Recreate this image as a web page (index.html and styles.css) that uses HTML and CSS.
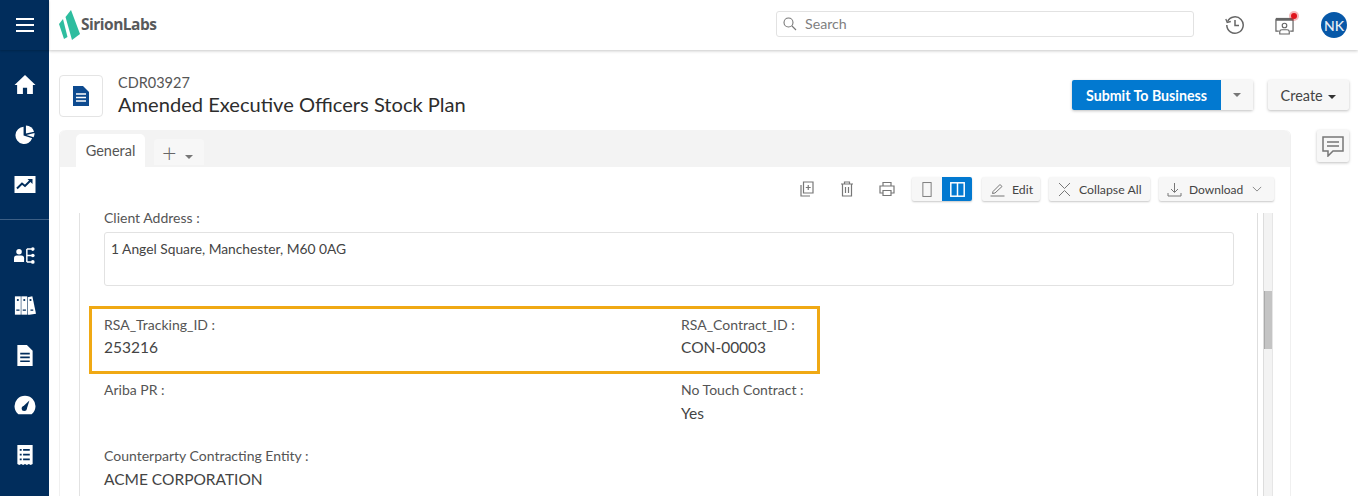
FILE: index.html
```html
<!DOCTYPE html>
<html lang="en">
<head>
<meta charset="utf-8">
<title>Amended Executive Officers Stock Plan</title>
<link rel="stylesheet" href="styles.css">
</head>
<body>
<div class="app">
  <nav class="sidebar">
    <div class="burger"><span></span><span></span><span></span></div>
    <div class="navgroup first">
      <svg viewBox="0 0 20 20" class="navicon"><path d="M10 1 L20 10.5 H17.500 V19 H12 V13 H8 V19 H2.500 V10.500 H0 Z" fill="#fff"/></svg>
      <svg viewBox="0 0 22 22" class="navicon"><path d="M9.500 3 A9 9 0 1 0 18.500 15 L9.500 12 Z" fill="#fff"/><path d="M12 1.500 A9.500 9.500 0 0 1 20.500 8 L12 10 Z" fill="#fff"/><path d="M12.500 11.500 L21 9.500 A9.500 9.500 0 0 1 20 14 Z" fill="#fff"/></svg>
      <svg viewBox="0 0 22 18" class="navicon"><rect width="21" height="17" x=".5" y=".5" fill="#fff"/><path d="M3 13 L8 8 L11 10.500 L17 4.500" fill="none" stroke="#012d5c" stroke-width="2"/><path d="M13.500 3.500 H18.500 V8.500 Z" fill="#012d5c"/></svg>
    </div>
    <div class="navgroup second">
      <svg viewBox="0 0 24 22" class="navicon"><circle cx="5.500" cy="7" r="3" fill="#fff"/><path d="M0 18 V14 Q0 11 3 11 H8 Q11 11 11 14 V18 Z" fill="#fff"/><path d="M14 4 V18 M14 4 H19 M14 11 H19 M14 18 H19" fill="none" stroke="#fff" stroke-width="1.600"/><circle cx="20.500" cy="4" r="2" fill="#fff"/><circle cx="20.500" cy="11" r="2" fill="#fff"/><circle cx="20.500" cy="18" r="2" fill="#fff"/></svg>
      <svg viewBox="0 0 24 22" class="navicon"><rect x="1" y="1" width="6.400" height="20" fill="#fff"/><rect x="8" y="1" width="6.400" height="20" fill="#fff"/><path d="M15 2 L20 1 L24 20 L17 21 H15 Z" fill="#fff"/><circle cx="4.200" cy="5" r="1.200" fill="#012d5c"/><circle cx="11.200" cy="5" r="1.200" fill="#012d5c"/><circle cx="18" cy="5" r="1.200" fill="#012d5c"/><path d="M2.500 16 H6 M9.500 16 H13 M18 16 H21" stroke="#012d5c" stroke-width="1.400"/></svg>
      <svg viewBox="0 0 18 22" class="navicon doc"><path d="M1 0 H11 L17 6 V22 H1 Z" fill="#fff"/><path d="M4 9 H14 M4 13 H14 M4 17 H14" stroke="#012d5c" stroke-width="1.700"/></svg>
      <svg viewBox="0 0 20 18" class="navicon"><path d="M4 17 A9.500 9.500 0 1 1 16 17 Z" fill="#fff"/><path d="M7 11 L14 4.500 L11.500 12.500 Z" fill="#012d5c"/><circle cx="9.300" cy="11.700" r="2.300" fill="#012d5c"/></svg>
      <svg viewBox="0 0 18 22" class="navicon doc"><path d="M1 0 H17 V20 L15 21 L13 20 L11 21 L9 20 L7 21 L5 20 L3 21 L1 20 Z" fill="#fff"/><path d="M7 5 H14 M7 10 H14 M7 15 H14 M3.500 5 H5.500 M3.500 10 H5.500 M3.500 15 H5.500" stroke="#012d5c" stroke-width="1.800"/></svg>
    </div>
  </nav>
  <div class="main">
    <header class="topbar">
      <div class="logo">
        <svg viewBox="0 0 21 30" class="logomark"><path d="M4 9 L0 14 L5 29 L8.500 27 Z" fill="#2ebd9f"/><path d="M12 0 L6.500 7 L13 30 L21 24 Z" fill="#2ebd9f"/></svg>
        <span class="logotext">SirionLabs</span>
      </div>
      <div class="searchbox">
        <svg viewBox="0 0 14 14" class="searchicon"><circle cx="5.500" cy="5.500" r="4.500" fill="none" stroke="#777" stroke-width="1.100"/><path d="M9 9 L13 13" stroke="#777" stroke-width="1.100"/></svg>
        <span class="searchtext">Search</span>
      </div>
      <div class="topicons">
        <svg viewBox="0 0 20 20" class="ticon"><path d="M2.600 6.500 A8.200 8.200 0 1 1 1.800 10" fill="none" stroke="#666" stroke-width="1.500"/><path d="M0.800 4 L2.200 7.500 L5.800 6.500" fill="none" stroke="#666" stroke-width="1.300"/><path d="M10 5 V10.500 H14" fill="none" stroke="#666" stroke-width="1.500"/></svg>
        <div class="notif">
          <svg viewBox="0 0 20 20" class="ticon small"><path d="M1 3 H19 V16 H16 M4 16 H1 V3" fill="none" stroke="#666" stroke-width="1.300"/><rect x="1" y="2" width="18" height="3" fill="#666"/><circle cx="10" cy="10" r="2.400" fill="none" stroke="#666" stroke-width="1.200"/><path d="M5 19 V16.500 Q5 14.500 7.500 14.500 H12.500 Q15 14.500 15 16.500 V19 Z" fill="none" stroke="#666" stroke-width="1.200"/></svg>
          <span class="dot"></span>
        </div>
        <div class="avatar">NK</div>
      </div>
    </header>
    <div class="content">
      <div class="pagehead">
        <div class="docbox"><svg viewBox="0 0 16 20" class="docicon"><path d="M0 0 H10 L16 6 V20 H0 Z" fill="#0d4a8f"/><path d="M3 8 H13 M3 11.500 H13 M3 15 H13" stroke="#fff" stroke-width="1.300"/></svg></div>
        <div class="titles">
          <div class="docid">CDR03927</div>
          <h1>Amended Executive Officers Stock Plan</h1>
        </div>
        <div class="actions">
          <div class="splitbtn"><button class="primary">Submit To Business</button><button class="caretbtn"><i class="caret grey"></i></button></div>
          <button class="create">Create <i class="caret dark"></i></button>
        </div>
      </div>
      <div class="belowhead">
        <section class="card">
          <div class="tabs">
            <div class="tab">General</div>
            <div class="addtab"><span class="plus">+</span><i class="caret grey tiny"></i></div>
          </div>
          <div class="toolbar">
            <svg viewBox="0 0 16 16" class="tool"><path d="M4.500 1 H14 V12 H4.500 Z M2 4 V15 H11" fill="none" stroke="#777" stroke-width="1.200"/><path d="M9.250 4 V9 M6.800 6.500 H11.700" stroke="#777" stroke-width="1.200"/></svg>
            <svg viewBox="0 0 16 16" class="tool"><path d="M2 3 H14 M5.500 3 V1 H10.500 V3 M3.500 3 V15 H12.500 V3 M6.500 6 V12 M9.500 6 V12" fill="none" stroke="#777" stroke-width="1.200"/></svg>
            <svg viewBox="0 0 16 16" class="tool"><path d="M4 5 V1.500 H12 V5 M4 12 H1 V5 H15 V12 H12 M4 9.500 H12 V14.500 H4 Z" fill="none" stroke="#777" stroke-width="1.200"/></svg>
            <div class="viewtoggle">
              <span class="vt"><svg viewBox="0 0 10 16"><rect x=".6" y=".6" width="8.800" height="14.800" fill="none" stroke="#777" stroke-width="1"/></svg></span>
              <span class="vt on"><svg viewBox="0 0 15 15"><rect x=".8" y=".8" width="13.400" height="13.400" fill="none" stroke="#fff" stroke-width="1.500"/><path d="M7.500 1 V14" stroke="#fff" stroke-width="1.500"/></svg></span>
            </div>
            <button class="toolbtn edit"><svg viewBox="0 0 15 15"><path d="M3 9.500 L10 2.500 L12 4.500 L5 11 L2.500 11.500 Z" fill="none" stroke="#777" stroke-width="1"/><path d="M0.500 14 H14.500" stroke="#777"/></svg>Edit</button>
            <button class="toolbtn collapse"><svg viewBox="0 0 13 15"><path d="M1 1 L6.500 6.500 L12 1 M1 14 L6.500 8.500 L12 14" fill="none" stroke="#777" stroke-width="1"/></svg>Collapse All</button>
            <button class="toolbtn download"><svg viewBox="0 0 15 15"><path d="M7.500 1 V10 M4 7 L7.500 10.500 L11 7 M1 11 V14 H14 V11" fill="none" stroke="#777" stroke-width="1"/></svg>Download<svg viewBox="0 0 12 7" class="chev"><path d="M1 1 L6 6 L11 1" fill="none" stroke="#777" stroke-width="1"/></svg></button>
          </div>
          <div class="scrollarea">
            <div class="fields">
              <div class="field addr">
                <div class="label">Client Address :</div>
                <div class="textarea">1 Angel Square, Manchester, M60 0AG</div>
              </div>
              <div class="highlight">
                <div class="field"><div class="label">RSA_Tracking_ID :</div><div class="value">253216</div></div>
                <div class="field"><div class="label">RSA_Contract_ID :</div><div class="value">CON-00003</div></div>
              </div>
              <div class="row">
                <div class="field"><div class="label">Ariba PR :</div></div>
                <div class="field"><div class="label">No Touch Contract :</div><div class="value">Yes</div></div>
              </div>
              <div class="row single">
                <div class="field"><div class="label">Counterparty Contracting Entity :</div><div class="value">ACME CORPORATION</div></div>
              </div>
            </div>
            <div class="scrolltrack"><div class="thumb"></div></div>
          </div>
        </section>
        <aside class="side">
          <button class="commentbtn"><svg viewBox="0 0 22 21"><path d="M1 1 H21 V15 H11 L6 20 V15 H1 Z" fill="none" stroke="#777" stroke-width="1.500"/><path d="M5 6 H17 M5 10 H17" stroke="#777" stroke-width="1.500"/></svg></button>
        </aside>
      </div>
    </div>
  </div>
</div>
</body>
</html>
```
FILE: styles.css
```css
* { box-sizing: border-box; }
html, body { margin: 0; padding: 0; height: 496px; overflow: hidden; background: #fff; }
body { font-family: Lato, "Open Sans", sans-serif; color: #444; font-size: 14px; }
button { font-family: inherit; cursor: pointer; }
.app { display: flex; height: 496px; overflow: hidden; }

.sidebar { width: 49px; flex: none; background: #012d5c; display: flex; flex-direction: column; align-items: center; }
.burger { height: 50px; flex: none; display: flex; flex-direction: column; justify-content: center; gap: 4px; width: 100%; align-items: center; box-shadow: 0 1px 2px rgba(0,0,0,.2); }
.burger span { display: block; width: 18px; height: 2px; background: #fff; }
.navgroup { display: flex; flex-direction: column; align-items: center; width: 100%; }
.navgroup.first { padding-top: 24px; gap: 29px; height: 170px; flex: none; border-bottom: 1px solid #3d5f85; }
.navgroup.second { padding-top: 25px; gap: 29px; }
.navicon { width: 22px; height: 21px; display: block; flex: none; }
.navicon.doc { width: 18px; height: 21px; }

.main { flex: 1; min-width: 0; display: flex; flex-direction: column; }
.topbar { height: 50px; flex: none; display: flex; align-items: center; padding: 0 11px 0 10px; box-shadow: 0 1px 3px rgba(0,0,0,.22); position: relative; }
.logo { display: flex; align-items: center; gap: 1px; }
.logomark { width: 21px; height: 30px; }
.logotext { font-family: "Open Sans", sans-serif; font-weight: 700; font-size: 15.500px; line-height: 20px; color: #58595b; letter-spacing: -.5px; margin-top: -3px; }
.searchbox { margin-left: auto; margin-top: -2px; width: 418px; height: 26px; border: 1px solid #e2e2e2; border-radius: 3px; display: flex; align-items: center; padding-left: 6px; gap: 8px; color: #808080; font-size: 14.200px; }
.searchicon { width: 14px; height: 14px; }
.searchtext { margin-top: -2px; }
.topicons { display: flex; align-items: center; margin-left: 31px; }
.ticon { width: 20px; height: 20px; display: block; }
.ticon.small { width: 19px; height: 19px; }
.notif { position: relative; margin-left: 30px; }
.dot { position: absolute; top: -3px; right: -3px; width: 6px; height: 6px; border-radius: 50%; background: #e0141c; box-shadow: 0 0 0 2px rgba(224,20,28,.3); }
.avatar { margin-left: 27px; width: 26px; height: 26px; border-radius: 50%; background: #0758a8; color: #e8eef5; font-size: 14px; font-weight: 500; display: flex; align-items: center; justify-content: center; }

.content { flex: 1; min-height: 0; padding: 25px 9px 0 10px; display: flex; flex-direction: column; }
.pagehead { display: flex; height: 55px; flex: none; }
.docbox { width: 44px; height: 42px; border: 1px solid #e4e4e4; border-radius: 4px; display: flex; align-items: center; justify-content: center; }
.docicon { width: 16px; height: 20px; }
.titles { margin-left: 15px; margin-top: -1px; }
.docid { font-size: 14.500px; color: #555; line-height: 18px; }
h1 { margin: 0; font-size: 20.100px; font-weight: 400; color: #2d2d2d; line-height: 24px; }
.actions { margin-left: auto; display: flex; align-items: flex-start; gap: 15px; padding-top: 5px; }
.splitbtn { display: flex; border-radius: 2px; box-shadow: 0 1px 3px rgba(0,0,0,.25); }
.primary { width: 149px; height: 30px; border: 0; background: #0279d0; color: #fff; font-weight: 700; font-size: 14.200px; border-radius: 2px 0 0 2px; padding: 0; }
.caretbtn { width: 32px; height: 30px; border: 0; background: #f7f7f7; padding: 0; display: flex; align-items: center; justify-content: center; }
.create { width: 81px; height: 30px; border: 0; border-radius: 2px; background: #f7f7f7; box-shadow: 0 1px 3px rgba(0,0,0,.25); color: #444; font-size: 14.500px; padding: 0; }
.caret { display: inline-block; width: 0; height: 0; border-left: 4px solid transparent; border-right: 4px solid transparent; vertical-align: 2px; margin-left: 2px; }
.caret.grey { border-top: 4px solid #777; margin-left: 0; vertical-align: 0; }
.caret.dark { border-top: 4px solid #333; }
.caret.tiny { margin: 10px 0 0 8px; }

.belowhead { flex: 1; min-height: 0; display: flex; gap: 26px; }
.card { width: 1232px; flex: none; height: 380px; border-radius: 6px 6px 0 0; border: 1px solid #f0f0f0; border-top: 0; display: flex; flex-direction: column; }
.tabs { height: 37px; flex: none; background: #f3f3f3; border-radius: 6px 6px 0 0; display: flex; align-items: flex-end; padding-left: 16px; gap: 9px; }
.tab { width: 69px; height: 33px; background: #fff; border-radius: 5px 5px 0 0; color: #555; font-size: 14.500px; text-align: center; line-height: 33px; }
.addtab { width: 50px; height: 26px; margin-bottom: 2px; background: #f7f7f7; border-radius: 4px 4px 0 0; display: flex; align-items: center; padding-left: 8px; color: #666; }
.plus { font-size: 25px; line-height: 26px; font-weight: 300; }

.toolbar { height: 46px; flex: none; display: flex; align-items: center; justify-content: flex-end; padding: 0 16px 2px 0; }
.tool { width: 16px; height: 16px; margin-right: 24px; }
.tool:nth-child(3) { margin-right: 17px; }
.viewtoggle { display: flex; height: 24px; box-shadow: 0 1px 2px rgba(0,0,0,.22); border-radius: 2px; background: #f7f7f7; margin-right: 10px; }
.vt { width: 30px; display: flex; align-items: center; justify-content: center; }
.vt svg { width: 10px; height: 15px; }
.vt.on { background: #0279d0; border-radius: 0 2px 2px 0; }
.vt.on svg { width: 15px; height: 15px; }
.toolbtn { height: 24px; border: 0; border-radius: 2px; background: #f7f7f7; box-shadow: 0 1px 2px rgba(0,0,0,.22); color: #444; font-size: 12.300px; display: flex; align-items: center; padding: 0; margin-right: 9px; }
.toolbtn:last-child { margin-right: 0; }
.toolbtn svg { width: 15px; height: 15px; flex: none; }
.edit { width: 58px; padding-left: 8px; gap: 7px; }
.collapse { width: 101px; padding-left: 9px; gap: 8px; }
.collapse svg { width: 13px; }
.download { width: 115px; padding-left: 8px; gap: 7px; font-size: 12px; }
.toolbtn .chev { width: 10px; height: 6px; margin-left: 2px; }

.scrollarea { flex: 1; min-height: 0; display: flex; margin-left: 19px; margin-right: 17px; border-left: 1px solid #e2e2e2; }
.fields { flex: 1; min-width: 0; padding-left: 9px; border-right: 1px solid #dedede; padding-right: 23px; }
.field { min-width: 0; }
.label { font-size: 14px; color: #555; line-height: 18px; padding-left: 15px; }
.addr { margin-top: -4px; }
.textarea { margin: 5px 0 0 15px; height: 54px; border: 1px solid #e2e2e2; border-radius: 3px; padding: 7px 6px; font-size: 13.800px; color: #444; line-height: 18px; }
.value { font-size: 15.500px; color: #444; line-height: 20px; padding-left: 15px; margin-top: 3px; }
.highlight { margin-top: 20px; width: 731px; height: 68px; border: 3px solid #f0a914; display: grid; grid-template-columns: 577px 1fr; padding-top: 7px; margin-bottom: 7px; }
.highlight .label, .highlight .value { padding-left: 12px; }
.row { display: grid; grid-template-columns: 577px 1fr; height: 66px; }
.row .label, .row .value { padding-left: 15px; }
.row .value { margin-top: 4px; }
.scrolltrack { width: 10px; flex: none; background: #f3f3f3; margin-left: 5px; border-left: 1px solid #ddd; border-right: 1px solid #e6e6e6; position: relative; }
.thumb { position: absolute; top: 78px; left: 0; right: 0; height: 58px; background: #c4c4c4; border-left: 1px solid #aaa; }

.side { flex: none; }
.commentbtn { width: 32px; height: 32px; border: 0; border-radius: 2px; background: #f7f7f7; box-shadow: 0 1px 3px rgba(0,0,0,.25); padding: 0; display: flex; align-items: center; justify-content: center; }
.commentbtn svg { width: 22px; height: 21px; }
```
